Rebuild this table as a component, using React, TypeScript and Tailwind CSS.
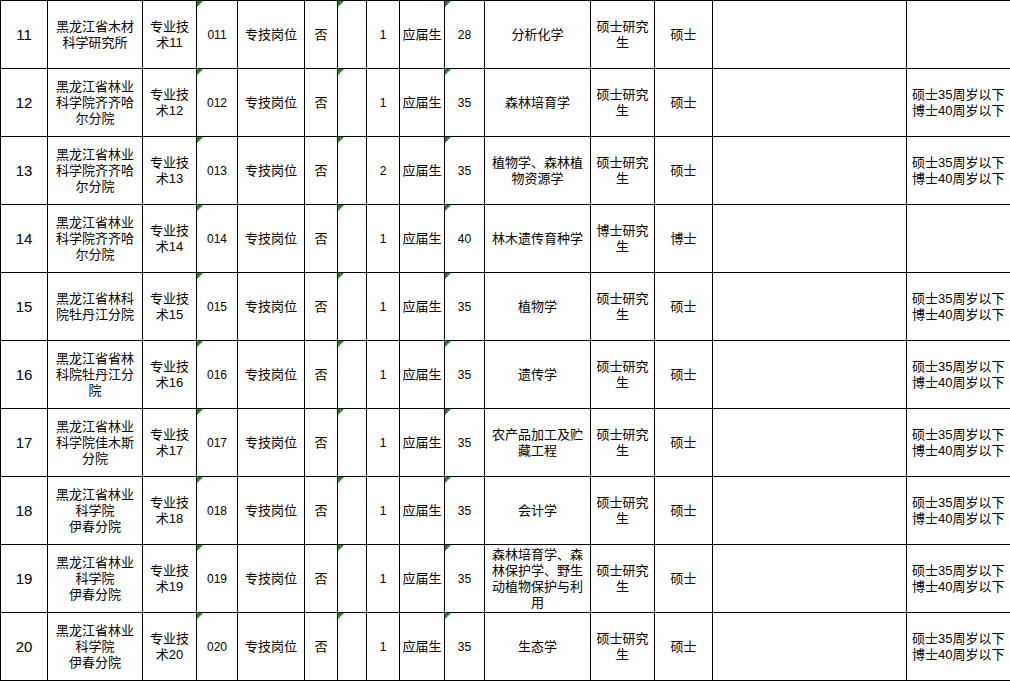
import React from "react";

type Row = {
  no: string;
  unit: string[];
  code: string;
  count: string;
  age: string;
  major: string[];
  edu: string;
  degree: string;
  remark: boolean;
};

const rows: Row[] = [
  { no: "11", unit: ["黑龙江省木材", "科学研究所"], code: "011", count: "1", age: "28", major: ["分析化学"], edu: "硕士", degree: "硕士", remark: false },
  { no: "12", unit: ["黑龙江省林业", "科学院齐齐哈", "尔分院"], code: "012", count: "1", age: "35", major: ["森林培育学"], edu: "硕士", degree: "硕士", remark: true },
  { no: "13", unit: ["黑龙江省林业", "科学院齐齐哈", "尔分院"], code: "013", count: "2", age: "35", major: ["植物学、森林植", "物资源学"], edu: "硕士", degree: "硕士", remark: true },
  { no: "14", unit: ["黑龙江省林业", "科学院齐齐哈", "尔分院"], code: "014", count: "1", age: "40", major: ["林木遗传育种学"], edu: "博士", degree: "博士", remark: false },
  { no: "15", unit: ["黑龙江省林科", "院牡丹江分院"], code: "015", count: "1", age: "35", major: ["植物学"], edu: "硕士", degree: "硕士", remark: true },
  { no: "16", unit: ["黑龙江省省林", "科院牡丹江分", "院"], code: "016", count: "1", age: "35", major: ["遗传学"], edu: "硕士", degree: "硕士", remark: true },
  { no: "17", unit: ["黑龙江省林业", "科学院佳木斯", "分院"], code: "017", count: "1", age: "35", major: ["农产品加工及贮", "藏工程"], edu: "硕士", degree: "硕士", remark: true },
  { no: "18", unit: ["黑龙江省林业", "科学院", "伊春分院"], code: "018", count: "1", age: "35", major: ["会计学"], edu: "硕士", degree: "硕士", remark: true },
  { no: "19", unit: ["黑龙江省林业", "科学院", "伊春分院"], code: "019", count: "1", age: "35", major: ["森林培育学、森", "林保护学、野生", "动植物保护与利", "用"], edu: "硕士", degree: "硕士", remark: true },
  { no: "20", unit: ["黑龙江省林业", "科学院", "伊春分院"], code: "020", count: "1", age: "35", major: ["生态学"], edu: "硕士", degree: "硕士", remark: true },
];

function Lines({ lines }: { lines: string[] }) {
  return (
    <div>
      {lines.map((l, i) => (
        <div key={i}>{l}</div>
      ))}
    </div>
  );
}

function Tri() {
  return (
    <span className="absolute left-0 top-0 h-0 w-0 border-t-[6px] border-r-[6px] border-t-[#1f8a1f] border-r-transparent" />
  );
}

const cell =
  "relative flex h-[68px] items-center justify-center border-b border-r border-black text-center";

export default function App() {
  return (
    <div className="h-[681px] w-[1010px] overflow-hidden bg-white font-['Liberation_Sans','Noto_Sans_CJK_SC',sans-serif] text-[13px] leading-[16px] text-black">
      <div className="grid w-[1108px] grid-cols-[47px_95px_54px_41px_67px_33px_29px_33px_45px_40px_106px_64px_58px_194px_200px] border-l border-t border-black">
        {rows.map((r) => (
          <React.Fragment key={r.no}>
            <div className={`${cell} text-[15px]`}>{r.no}</div>
            <div className={cell}>
              <Lines lines={r.unit} />
            </div>
            <div className={cell}>
              <Lines lines={["专业技", "术" + r.no]} />
            </div>
            <div className={`${cell} text-[12px]`}>
              <Tri />
              {r.code}
            </div>
            <div className={cell}>专技岗位</div>
            <div className={cell}>否</div>
            <div className={cell}>
              <Tri />
            </div>
            <div className={`${cell} text-[12px]`}>{r.count}</div>
            <div className={cell}>应届生</div>
            <div className={`${cell} text-[12px]`}>
              <Tri />
              {r.age}
            </div>
            <div className={cell}>
              <Lines lines={r.major} />
            </div>
            <div className={cell}>
              <Lines lines={[r.edu + "研究", "生"]} />
            </div>
            <div className={cell}>{r.degree}</div>
            <div className={cell}></div>
            <div className={`${cell} justify-start pl-[5px] text-left`}>
              {r.remark ? <Lines lines={["硕士35周岁以下", "博士40周岁以下"]} /> : null}
            </div>
          </React.Fragment>
        ))}
      </div>
    </div>
  );
}
